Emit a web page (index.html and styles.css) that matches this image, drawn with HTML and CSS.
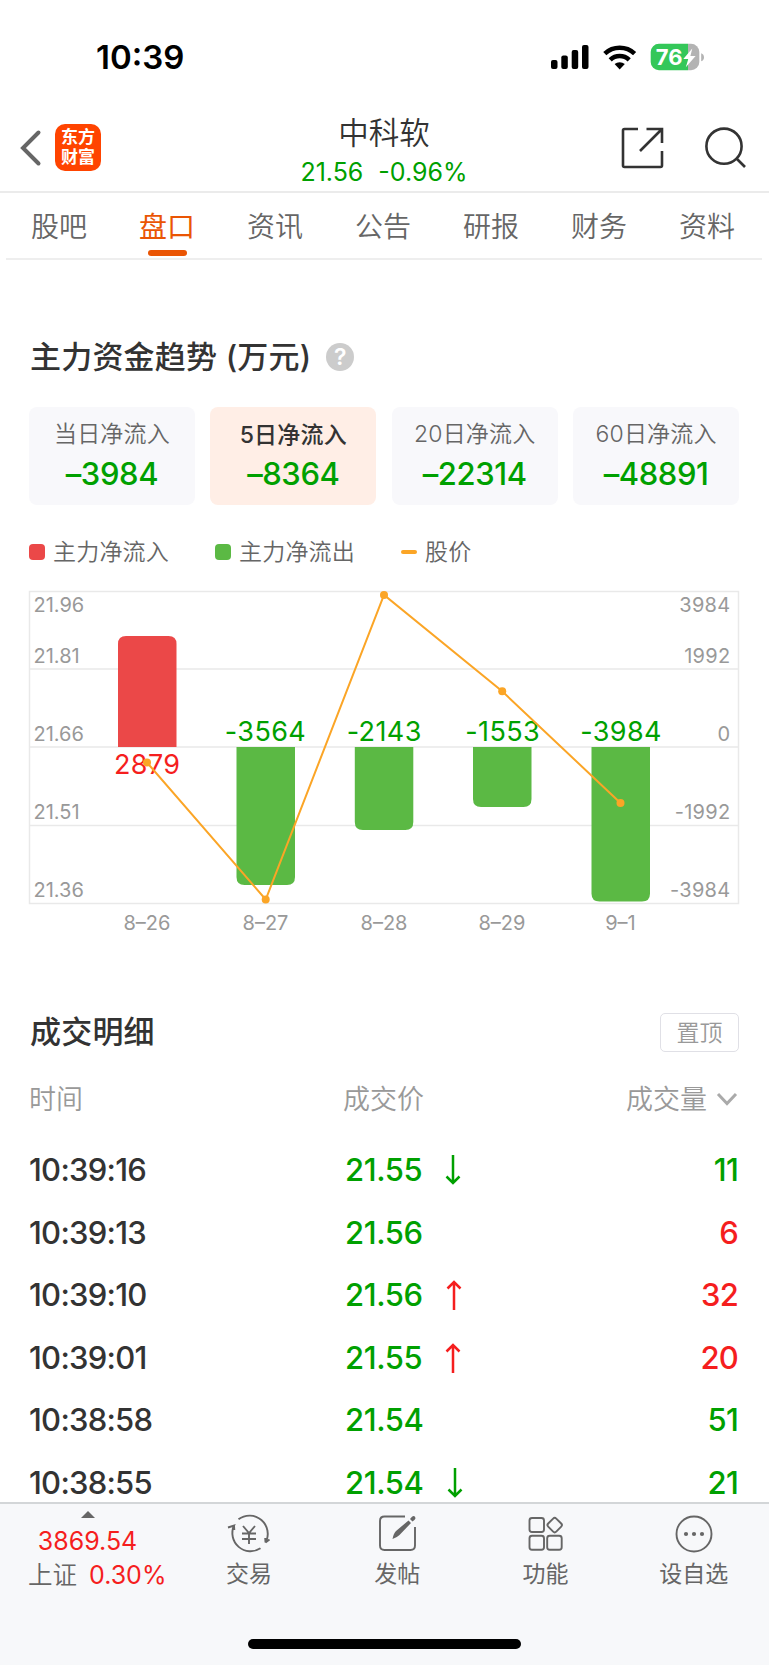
FILE: index.html
```
<!DOCTYPE html>
<html lang="zh-CN">
<head>
    <meta charset="UTF-8">
    <meta name="viewport" content="width=device-width, initial-scale=1.0">
    <title>中科软--盘口</title>
    <link rel="stylesheet" href="styles.css">
</head>
<body>
    <div class="status">
        <span class="clock">10:39</span>
        <svg class="status_icons" width="156" height="30" viewBox="0 0 156 30">
            <rect x="1" y="17" width="6.5" height="9" rx="2"/>
            <rect x="11.3" y="12.5" width="6.5" height="13.5" rx="2"/>
            <rect x="21.7" y="7" width="6.5" height="19" rx="2"/>
            <rect x="32" y="2" width="6.5" height="24" rx="2"/>
            <g fill="none" stroke="#000" stroke-width="4.6">
                <path d="M54.8 10.6a22 22 0 0 1 29.8 0"/>
                <path d="M60.2 16.8a13.8 13.8 0 0 1 19 0"/>
            </g>
            <path d="M64.6 21.1a7.8 7.8 0 0 1 10.2 0l-5.1 5.3z"/>
            <path fill="#34c759" d="M109 .8h29v26.5h-29a8.3 8.3 0 0 1-8.3-8.3V9.1a8.3 8.3 0 0 1 8.3-8.3z"/>
            <path fill="#b3b3b3" d="M138 .8h3a8.3 8.3 0 0 1 8.3 8.3V19a8.3 8.3 0 0 1-8.3 8.3h-3z"/>
            <path fill="#b3b3b3" d="M151.2 10.2q2.8 1 2.8 4t-2.8 4z"/>
            <text class="battery" x="105.8" y="21.8">76</text>
            <path fill="#fff" d="M142.3 5.5l-9 10.5h5l-2.5 8.3 9.8-11.3h-5.2z"/>
        </svg>
    </div>

    <div class="header">
        <svg class="back" width="24" height="40" viewBox="0 0 24 40"><path d="M19.5 5.5L4 21 19.5 36.5"/></svg>
        <div class="logo"><span>东方</span><span>财富</span></div>
        <div class="stock">
            <h1>中科软</h1>
            <p><span>21.56</span><span>-0.96%</span></p>
        </div>
        <svg class="share" width="44" height="44" viewBox="0 0 44 44"><path d="M18 3H4.5Q3 3 3 4.5V39.5Q3 41 4.5 41H40.5Q42 41 42 39.5V25M26.5 3H42V17M41.5 3.5L20 25"/></svg>
        <svg class="search" width="44" height="44" viewBox="0 0 44 44"><circle cx="20" cy="20.2" r="17.6"/><path d="M32.5 32.5L41 41"/></svg>
    </div>

    <ul class="tabs">
        <li>股吧</li>
        <li class="active">盘口</li>
        <li>资讯</li>
        <li>公告</li>
        <li>研报</li>
        <li>财务</li>
        <li>资料</li>
    </ul>

    <div class="fund">
        <h2>主力资金趋势 (万元)<i class="help">?</i></h2>
        <ul class="cards">
            <li><span>当日净流入</span><b>–3984</b></li>
            <li class="active"><span>5日净流入</span><b>–8364</b></li>
            <li><span>20日净流入</span><b>–22314</b></li>
            <li><span>60日净流入</span><b>–48891</b></li>
        </ul>
        <div class="legend">
            <span class="in">主力净流入</span>
            <span class="out">主力净流出</span>
            <span class="price">股价</span>
        </div>
        <svg class="chart" width="712" height="350" viewBox="28 590 712 350">
            <g class="grid">
                <rect x="29.5" y="591.5" width="709" height="312"/>
                <path d="M29 669H739M29 747H739M29 825.5H739"/>
            </g>
            <g class="axis">
                <text x="33.5" y="612">21.96</text>
                <text x="33.5" y="663">21.81</text>
                <text x="33.5" y="741">21.66</text>
                <text x="33.5" y="819">21.51</text>
                <text x="33.5" y="897">21.36</text>
            </g>
            <g class="axis right">
                <text x="730.5" y="612">3984</text>
                <text x="730.5" y="663">1992</text>
                <text x="730.5" y="741">0</text>
                <text x="730.5" y="819">-1992</text>
                <text x="730.5" y="897">-3984</text>
            </g>
            <path class="bar_in" d="M118 747V644q0-8 8-8h42.500q8 0 8 8V747z"/>
            <g class="bar_out">
                <path d="M236.5 747v130q0 8 8 8h42.500q8 0 8-8V747z"/>
                <path d="M354.8 747v75q0 8 8 8h42.500q8 0 8-8V747z"/>
                <path d="M473 747v52q0 8 8 8h42.500q8 0 8-8V747z"/>
                <path d="M591.5 747v146.500q0 8 8 8h42.500q8 0 8-8V747z"/>
            </g>
            <g class="value">
                <text class="red" x="147.2" y="773.5">2879</text>
                <text x="265.5" y="741">-3564</text>
                <text x="384.2" y="741">-2143</text>
                <text x="502.7" y="741">-1553</text>
                <text x="621" y="741">-3984</text>
            </g>
            <polyline class="line" points="147,762.5 265.7,899.5 384,595 502.2,691.3 620.5,803"/>
            <g class="dot">
                <circle cx="147" cy="762.5" r="4"/>
                <circle cx="265.7" cy="899.5" r="4"/>
                <circle cx="384" cy="595" r="4"/>
                <circle cx="502.2" cy="691.3" r="4"/>
                <circle cx="620.5" cy="803" r="4"/>
            </g>
            <g class="axis date">
                <text x="147" y="930">8–26</text>
                <text x="265.5" y="930">8–27</text>
                <text x="384" y="930">8–28</text>
                <text x="502" y="930">8–29</text>
                <text x="620.5" y="930">9–1</text>
            </g>
        </svg>
    </div>

    <div class="detail">
        <div class="detail_title">
            <h2>成交明细</h2>
            <a class="top_btn" href="javascript:;">置顶</a>
        </div>
        <div class="row head">
            <span>时间</span>
            <span>成交价</span>
            <span>成交量<svg width="22" height="14" viewBox="0 0 22 14"><path d="M2 2L11 11.5 20 2"/></svg></span>
        </div>
        <div class="row">
            <span>10:39:16</span>
            <span class="green">21.55<svg class="arrow" width="16" height="30" viewBox="0 0 16 30"><path d="M8 0V28M1.5 21.5L8 28l6.5-6.5"/></svg></span>
            <span class="green">11</span>
        </div>
        <div class="row">
            <span>10:39:13</span>
            <span class="green">21.56</span>
            <span class="red">6</span>
        </div>
        <div class="row">
            <span>10:39:10</span>
            <span class="green">21.56<svg class="arrow up" width="16" height="30" viewBox="0 0 16 30"><path d="M8 30V2M1.5 8.5L8 2l6.5 6.5"/></svg></span>
            <span class="red">32</span>
        </div>
        <div class="row">
            <span>10:39:01</span>
            <span class="green">21.55<svg class="arrow up" width="16" height="30" viewBox="0 0 16 30"><path d="M8 30V2M1.5 8.5L8 2l6.5 6.5"/></svg></span>
            <span class="red">20</span>
        </div>
        <div class="row">
            <span>10:38:58</span>
            <span class="green">21.54</span>
            <span class="green">51</span>
        </div>
        <div class="row">
            <span>10:38:55</span>
            <span class="green">21.54<svg class="arrow" width="16" height="30" viewBox="0 0 16 30"><path d="M8 0V28M1.5 21.5L8 28l6.5-6.5"/></svg></span>
            <span class="green">21</span>
        </div>
    </div>

    <div class="footer">
        <div class="nav">
            <div class="index">
                <i></i>
                <p>3869.54</p>
                <p><em>上证</em>0.30%</p>
            </div>
            <a href="javascript:;">
                <svg width="44" height="40" viewBox="0 0 44 40">
                    <path d="M11.5 5.3A18.2 18.2 0 0 1 38.5 28.5L42.5 25.5M38.5 28.5L38.2 24M33.5 34.3A18.2 18.2 0 0 1 7 11.500L1 13.5M7 11.5L7.3 16"/>
                    <path d="M16 12l6 7 6-7M22 19V30M15 19.5H29M15 25H29"/>
                </svg>
                交易
            </a>
            <a href="javascript:;">
                <svg width="44" height="40" viewBox="0 0 44 40">
                    <path d="M30 2.5H9.5Q5 2.5 5 7V31.5Q5 36 9.5 36H35.5Q40 36 40 31.5V13"/>
                    <path class="fill" d="M17.5 25q1-5.5 3.5-8L33.5 6.5l2.5 2.5-11.5 12q-2.5 2.5-7 4zM35 5l2-2.2q1.8-1.5 3 0t-.3 3L37.5 7.5z"/>
                </svg>
                发帖
            </a>
            <a href="javascript:;">
                <svg width="44" height="40" viewBox="0 0 44 40">
                    <rect x="6.5" y="4" width="14.5" height="14" rx="2.5"/>
                    <rect x="6.5" y="21.7" width="14.5" height="14" rx="2.5"/>
                    <rect x="24.2" y="21.7" width="14.5" height="14" rx="2.5"/>
                    <rect x="26" y="5.4" width="11.4" height="11.4" rx="2.2" transform="rotate(45 31.7 11.1)"/>
                </svg>
                功能
            </a>
            <a href="javascript:;">
                <svg width="44" height="40" viewBox="0 0 44 40">
                    <circle cx="22" cy="20" r="17.5"/>
                    <g class="fill"><circle cx="14" cy="20" r="2.1"/><circle cx="22" cy="20" r="2.1"/><circle cx="30" cy="20" r="2.1"/></g>
                </svg>
                设自选
            </a>
        </div>
        <div class="home"></div>
    </div>
</body>
</html>
```
FILE: styles.css
```
*{
    margin: 0;
    padding: 0;
    box-sizing: border-box;
}
body{
    width: 769px;
    height: 1665px;
    overflow: hidden;
    display: flex;
    flex-direction: column;
    background: #fff;
    color: #333;
    font-family: Inter, "Noto Sans CJK SC", sans-serif;
}
ul{
    list-style: none;
}
a{
    text-decoration: none;
}
i, em{
    font-style: normal;
}
svg{
    display: block;
    flex: none;
}
.red{
    color: #f51e1e;
}
.green{
    color: #00a000;
}

/* 状态栏 */
.status{
    height: 104px;
    padding: 41px 63px 0 96px;
    display: flex;
    justify-content: space-between;
}
.clock{
    height: 32px;
    line-height: 33px;
    font-size: 33px;
    font-weight: 600;
    color: #000;
}
.status_icons{
    margin-top: 2px;
}
.battery{
    font-size: 22px;
    font-weight: 700;
    fill: #fff;
}

/* 头部 */
.header{
    height: 89px;
    border-bottom: 2px solid #ebebeb;
    display: flex;
    align-items: flex-start;
}
.back{
    margin: 23px 0 0 19px;
    fill: none;
    stroke: #666;
    stroke-width: 4;
    stroke-linecap: round;
}
.logo{
    width: 46px;
    height: 47px;
    margin: 20px 0 0 12px;
    padding-top: 4px;
    border-radius: 10px;
    background: #ff4400;
    color: #fff;
    font-size: 17px;
    font-weight: 700;
    text-align: center;
}
.logo span{
    display: block;
    line-height: 19.5px;
}
.stock{
    width: 230px;
    margin: 9px 0 0 168px;
    text-align: center;
}
.stock h1{
    line-height: 39px;
    font-size: 30.5px;
    font-weight: 350;
}
.stock p{
    display: flex;
    justify-content: center;
    gap: 15px;
    line-height: 40px;
    font-size: 25px;
    color: #00a000;
}
.share, .search{
    fill: none;
    stroke: #333;
    stroke-width: 2.6;
}
.share{
    margin: 22px 0 0 120.5px;
}
.search{
    margin: 22px 0 0 40.5px;
}

/* 标签 */
.tabs{
    height: 67px;
    margin: 0 7px 0 6px;
    border-bottom: 2px solid #eee;
    display: flex;
}
.tabs li{
    width: 108px;
    flex: none;
    line-height: 68px;
    font-size: 28px;
    font-weight: 350;
    text-align: center;
    text-indent: -2px;
    color: #666;
    position: relative;
}
.tabs .active{
    color: #ea5504;
    font-weight: 400;
}
.tabs .active::after{
    content: '';
    width: 39px;
    height: 6px;
    border-radius: 3px;
    background: #ea5504;
    position: absolute;
    left: 34px;
    bottom: 2px;
}

/* 资金趋势 */
.fund{
    padding: 73px 30px 0 29px;
}
h2{
    height: 48px;
    display: flex;
    align-items: center;
    line-height: 48px;
    font-size: 31px;
    font-weight: 500;
    letter-spacing: .2px;
}
.fund h2{
    padding-left: 1px;
}
.help{
    width: 28px;
    height: 28px;
    margin-left: 15px;
    border-radius: 50%;
    background: #ccc;
    color: #fff;
    font-size: 23px;
    font-weight: 600;
    line-height: 28px;
    text-align: center;
}
.cards{
    margin-top: 26px;
    display: flex;
    gap: 15.5px;
}
.cards li{
    flex: 1;
    height: 98px;
    padding-top: 9px;
    border-radius: 8px;
    background: #f8f8fb;
    text-align: center;
}
.cards span{
    display: block;
    line-height: 36px;
    font-size: 23px;
    font-weight: 350;
    letter-spacing: .2px;
    color: #666;
}
.cards b{
    display: block;
    line-height: 44px;
    font-size: 31px;
    font-weight: 500;
    letter-spacing: -.4px;
    color: #00a000;
}
.cards .active{
    background: #ffeee6;
}
.cards .active span{
    padding-top: 2px;
    line-height: 34px;
    font-weight: 500;
    color: #333;
}
.legend{
    height: 36px;
    margin-top: 29px;
    display: flex;
    line-height: 36px;
    font-size: 23px;
    font-weight: 350;
    letter-spacing: .2px;
    color: #666;
}
.legend span{
    display: flex;
    align-items: center;
}
.legend span::before{
    content: '';
    width: 16px;
    height: 16px;
    margin-right: 8px;
    border-radius: 4px;
}
.legend .in::before{
    background: #eb4848;
}
.legend .out{
    margin-left: 46px;
}
.legend .out::before{
    background: #5bb944;
}
.legend .price{
    margin-left: 46px;
}
.legend .price::before{
    height: 4px;
    border-radius: 2px;
    background: #fba526;
}
.chart{
    margin: 20px 0 0 -1px;
}
.grid{
    fill: none;
    stroke: #e9e9e9;
    stroke-width: 1.5;
}
.axis{
    font-size: 20px;
    fill: #999;
}
.right{
    text-anchor: end;
    letter-spacing: .3px;
}
.date{
    text-anchor: middle;
}
.bar_in{
    fill: #eb4848;
}
.bar_out{
    fill: #5bb944;
}
.value{
    font-size: 27px;
    letter-spacing: .4px;
    fill: #00a000;
    text-anchor: middle;
}
.value .red{
    fill: #f51e1e;
}
.line{
    fill: none;
    stroke: #fba526;
    stroke-width: 2;
}
.dot{
    fill: #fba526;
}

/* 成交明细 */
.detail{
    padding: 68px 31px 0 30px;
}
.detail_title{
    display: flex;
    justify-content: space-between;
    align-items: center;
}
.detail_title h2{
    line-height: 50px;
}
.top_btn{
    width: 79px;
    height: 39px;
    margin-right: -1px;
    border: 1.5px solid #e0e0e6;
    border-radius: 5px;
    line-height: 38px;
    font-size: 23px;
    font-weight: 350;
    text-align: center;
    color: #999;
}
.row{
    height: 62.5px;
    display: grid;
    grid-template-columns: 315px 1fr 150px;
    line-height: 62.5px;
    font-size: 31px;
    font-weight: 500;
    letter-spacing: -.75px;
}
.row span{
    display: flex;
    align-items: center;
}
.row span:first-child{
    margin-left: -1px;
}
.row span:nth-child(2){
    letter-spacing: -.4px;
}
.row span:last-child{
    justify-content: flex-end;
}
.row svg{
    fill: none;
}
.head{
    height: 83px;
    line-height: 88px;
    font-size: 27px;
    font-weight: 350;
    color: #999;
}
.row.head span{
    letter-spacing: 0;
}
.head span:nth-child(2){
    margin-left: -2px;
}
.head svg{
    margin: 0 0 2px 9px;
    stroke: #aaa;
    stroke-width: 3;
}
.arrow{
    margin-left: 23px;
    stroke: #00a000;
    stroke-width: 2.5;
}
.up{
    stroke: #f51e1e;
}

/* 底部 */
.footer{
    position: fixed;
    left: 0;
    bottom: 0;
    width: 769px;
    height: 163px;
    border-top: 2px solid #d3d6d8;
    background: #f7f8fa;
}
.nav{
    height: 135px;
    display: flex;
}
.index{
    width: 175px;
    padding-top: 7px;
    font-size: 25px;
    line-height: 35px;
    color: #f51e1e;
    text-align: center;
}
.index i{
    display: block;
    width: 0;
    margin: 0 auto 6px;
    border: 7px solid transparent;
    border-top: 0;
    border-bottom-color: #666;
}
.index p:last-child{
    padding: 0 0 0 28px;
    line-height: 33px;
    display: flex;
    gap: 12px;
}
.index em{
    font-size: 24.5px;
    font-weight: 350;
    color: #666;
}
.nav a{
    width: 148.2px;
    padding-top: 10px;
    display: flex;
    flex-direction: column;
    align-items: center;
    gap: 2px;
    line-height: 36px;
    font-size: 23px;
    color: #666;
}
.nav svg{
    fill: none;
    stroke: #666;
    stroke-width: 1.9;
}
.nav .fill{
    fill: #666;
    stroke: none;
}
.home{
    width: 273px;
    height: 10px;
    margin: 0 auto;
    border-radius: 5px;
    background: #000;
}
```
